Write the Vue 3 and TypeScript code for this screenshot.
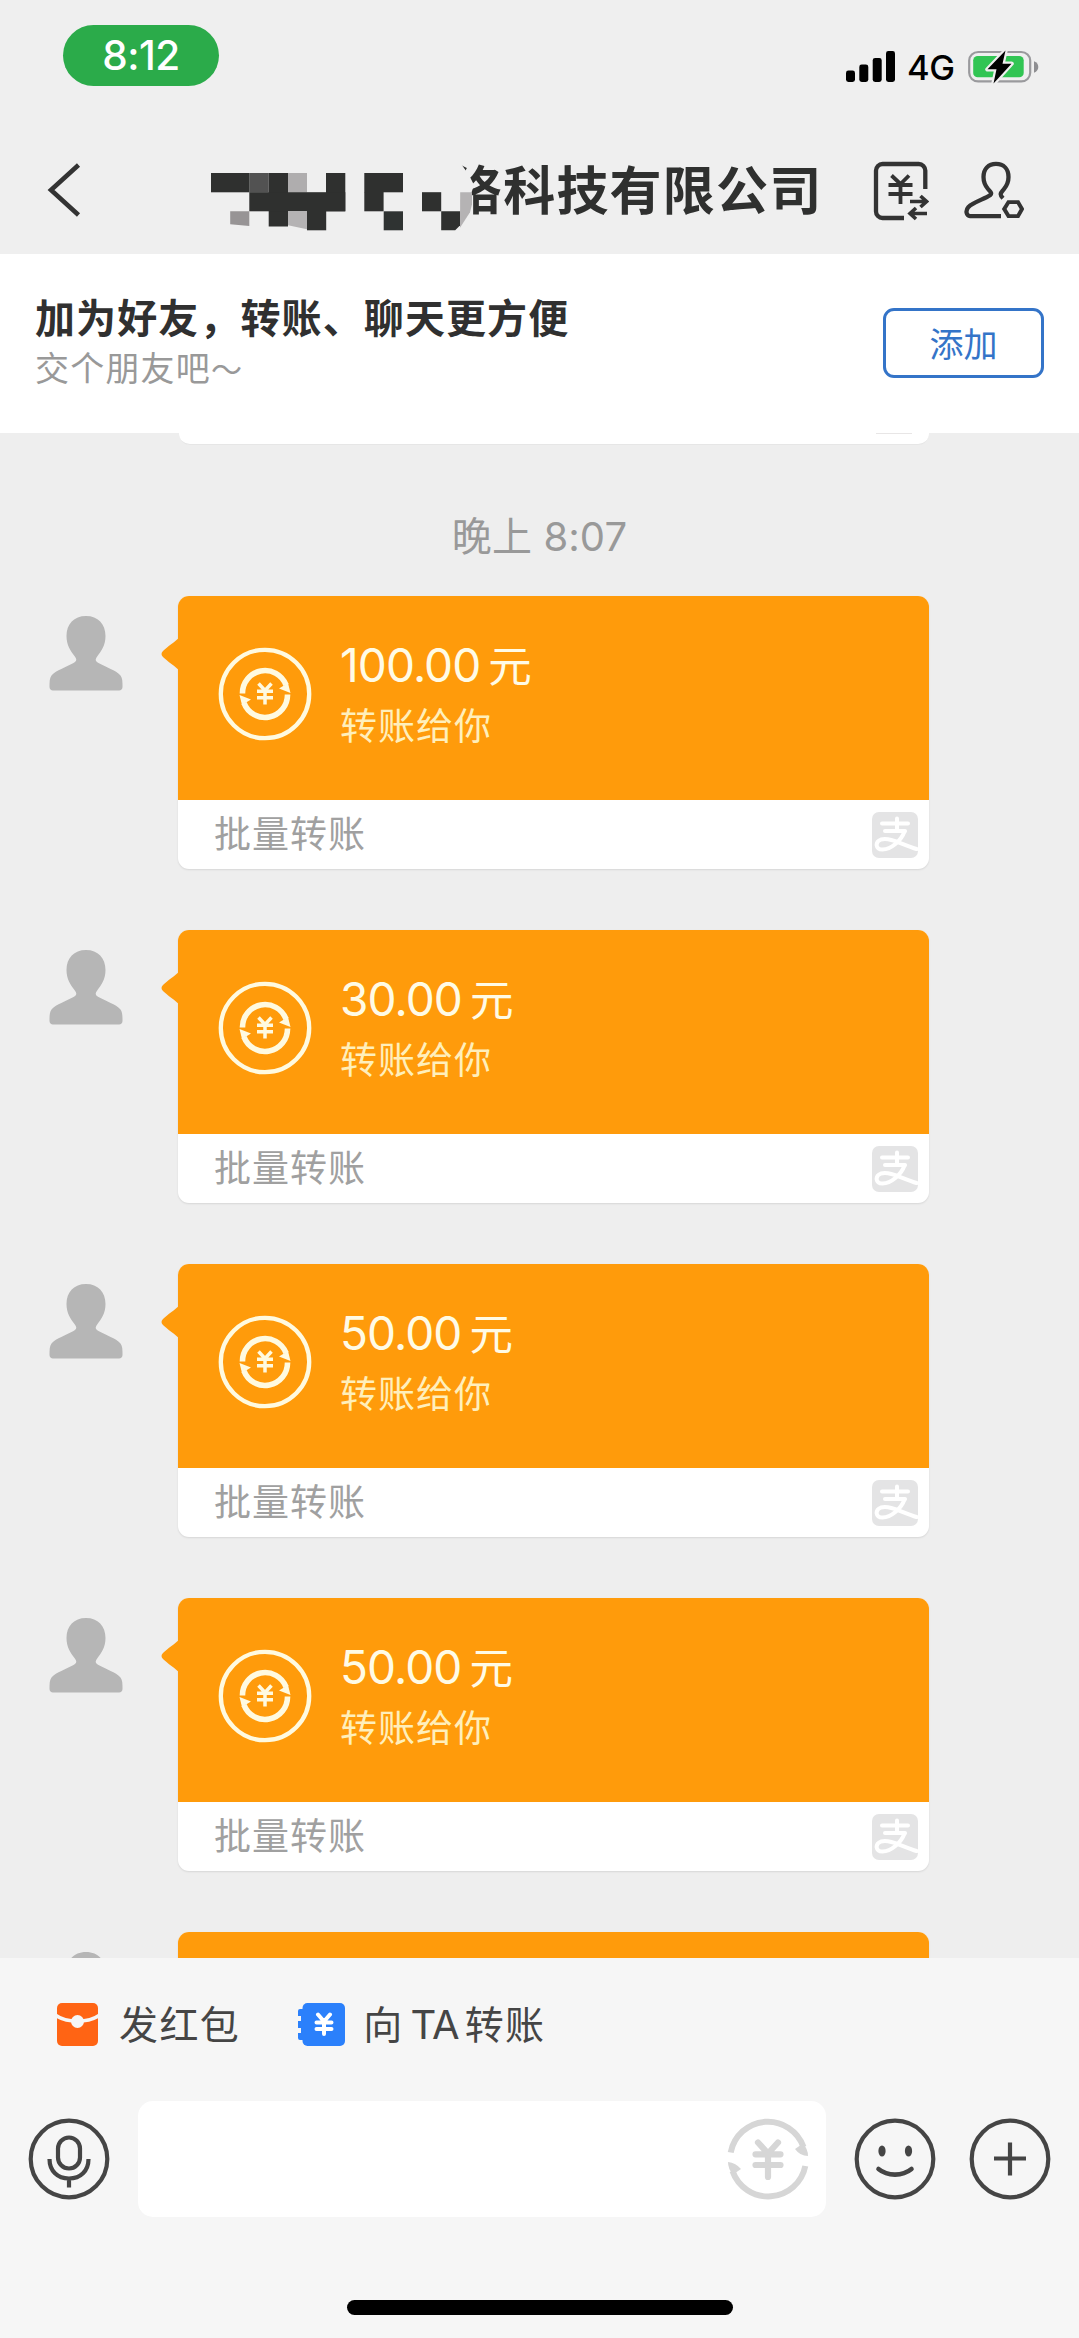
<script setup lang="ts">
interface Transfer {
  id: number
  amount: string
}

const transfers: Transfer[] = [
  { id: 1, amount: '100.00' },
  { id: 2, amount: '30.00' },
  { id: 3, amount: '50.00' },
  { id: 4, amount: '50.00' },
  { id: 5, amount: '' },
]

// Redaction blocks over the first half of the company name: x, y, width, height, fill
const blocks: [number, number, number, number, string][] = [
  [0, 0, 38.5, 19.3, '#2f302f'],
  [38.3, 0, 19.4, 19.3, '#525252'],
  [57.7, 0, 19.3, 53.5, '#2f302f'],
  [77, 0, 19, 19.3, '#afadae'],
  [115, 0, 19.3, 38.3, '#2f302f'],
  [38.3, 19.2, 96, 19.1, '#2f302f'],
  [96, 38, 19.2, 19.3, '#2f302f'],
  [153.3, 0, 38.7, 19.3, '#2f302f'],
  [153.3, 19, 19.3, 19.3, '#2f302f'],
  [172.7, 38.3, 19.3, 19, '#2f3332'],
  [211, 19.2, 19.2, 19.1, '#2f302f'],
]
</script>

<template>
  <div class="phone">
    <header class="top">
      <div class="status">
        <div class="clock">8:12</div>
        <div class="signals">
          <svg class="bars" width="49" height="31" viewBox="0 0 49 31">
            <rect x="0" y="19.500" width="9" height="11.500" rx="2.4" />
            <rect x="13.3" y="13.500" width="9" height="17.500" rx="2.4" />
            <rect x="26.7" y="7" width="9" height="24" rx="2.4" />
            <rect x="40" y="0" width="9" height="31" rx="2.4" />
          </svg>
          <span class="net">4G</span>
          <svg class="battery" width="71" height="36" viewBox="0 0 71 38" preserveAspectRatio="none">
            <rect x="1.2" y="3.2" width="61" height="31" rx="9" fill="none" stroke="#9a9a9d" stroke-width="2.2" />
            <path d="M66 13v12c3-1 4.300-3.500 4.300-6s-1.300-5-4.300-6z" fill="#8e8e91" />
            <rect x="5.200" y="7.300" width="50.500" height="22.500" rx="4.500" fill="#31c553" />
            <path d="M37.500 1.500L19.500 21.500h9L25.500 36.500L43.500 15.500h-9z" fill="#000" stroke="#efefef" stroke-width="4.500" stroke-linejoin="round" paint-order="stroke" />
          </svg>
        </div>
      </div>
      <div class="nav">
        <svg class="back" width="34" height="54" viewBox="0 0 34 54">
          <path d="M31.500 2L4 27l27.500 25" fill="none" stroke="#333" stroke-width="4.600" />
        </svg>
        <div class="name">
          <h1>络科技有限公司</h1>
          <svg class="mosaic" width="275" height="72" viewBox="0 -12 275 72">
            <path d="M232-12H248L258 2L263 12L259 24L261 43L262 58H232z" fill="#efefef" />
            <rect v-for="(b, i) in blocks" :key="i" :x="b[0]" :y="b[1]" :width="b[2]" :height="b[3]" :fill="b[4]" />
            <path d="M19.200 38.300h19.100v14.700l-19.100-1.800z" fill="#979495" />
            <path d="M77 38.300h19v18l-19-4z" fill="#b5b3b4" />
            <path d="M230.200 38.200h19v14l-5 5.100h-14z" fill="#2f302f" />
            <path d="M249.200 19.200h11.800v12l-2 8-10 15.500z" fill="#b5b3b4" />
          </svg>
        </div>
        <div class="tools">
          <svg width="56" height="60" viewBox="0 0 56 60" fill="none" stroke="#333" stroke-width="4.300">
            <path d="M52.300 28V9.500a6.500 6.500 0 0 0-6.500-6.500H9.500A6.500 6.500 0 0 0 3 9.500v41a6.500 6.500 0 0 0 6.500 6.500h21.500" />
            <path d="M18.500 14.500l9 8.500 8.500-8.500M15.500 24h24M15.500 33h24M27.500 22v21" stroke-width="3.800" />
            <path d="M37 40.500h16M47.500 35l6 5.500-6 5.500M54 52.500H38M43 47l-6 5.500 6 5.500" stroke-width="3.600" />
          </svg>
          <svg width="60" height="58" viewBox="0 0 60 60" preserveAspectRatio="none" fill="none" stroke="#333" stroke-width="4.300">
            <path d="M37 57H6c-3.500 0-5-5.500-1.500-9.500C9 43 21 39 26 35.500c2.500-2 .5-3.500-2-6.500-4-5-4.500-8-4.500-12.500C19.500 8 24.500 3 32 3s12.500 5 12.500 13.500c0 5-1 8-4.500 12.500-2.500 3.500-5.500 5-1 9.500" />
            <path d="M44.500 42.500h9.500l4 7.200-4 7.300h-9.500l-4.300-7.300z" stroke-width="4" />
          </svg>
        </div>
      </div>
    </header>

    <section class="banner">
      <div class="pitch">
        <div class="lead">加为好友，转账、聊天更方便</div>
        <div class="sub">交个朋友吧<i>～</i></div>
      </div>
      <button class="add" type="button">添加</button>
    </section>

    <main class="chat">
      <div class="previous"><i></i></div>
      <div class="when"><span>晚上</span> 8:07</div>
      <article v-for="t in transfers" :key="t.id" class="message">
        <svg class="avatar" width="74" height="76" viewBox="0 0 74 76">
          <path d="M37 1c12 0 19.500 8 19.500 20 0 9-4 15-8 20-2.500 3.500-2.500 5 1 7 8 4.500 17 7 22 12.500 2 2.500 2 6.500 2 11.500 0 2-1.500 3.500-3.500 3.500H4c-2 0-3.500-1.500-3.500-3.500 0-5 0-9 2-11.500C7.500 55 16.500 52.500 24.500 48c3.500-2 3.500-3.500 1-7-4-5-8-11-8-20C17.500 9 25 1 37 1z" fill="#b6b6b6" />
        </svg>
        <div class="card">
          <svg class="tail" width="19" height="34" viewBox="0 0 19 34">
            <path d="M19 0C15 4 6 10 2 14q-3 3 0 6c4 4 13 10 17 14z" fill="#ff9b0b" />
          </svg>
          <div class="money">
            <svg class="coin" width="94" height="94" viewBox="0 0 94 94" fill="none" stroke="#fffae0">
              <circle cx="47" cy="47" r="44.200" stroke-width="4.300" />
              <path d="M24.500 46.500A22.500 22.500 0 0 1 68 38" stroke-width="5.600" />
              <path d="M69.500 47.500A22.500 22.500 0 0 1 26 56" stroke-width="5.600" />
              <path d="M61 41.500L70 36L72.500 46z M33 52.500L24 58L21.500 48z" fill="#fffae0" stroke="none" />
              <path d="M40.500 36.500L47 43.500l6.500-7M39 44.300h16M39 50.700h16M47 43v14.500" stroke-width="3.500" />
            </svg>
            <div v-if="t.amount" class="detail">
              <div class="amount">{{ t.amount }}<span>元</span></div>
              <div class="to">转账给你</div>
            </div>
          </div>
          <div v-if="t.amount" class="foot">
            <span>批量转账</span>
            <svg width="46" height="46" viewBox="0 0 46 46">
              <rect width="46" height="46" rx="7" fill="#e4e4e5" />
              <g fill="none" stroke="#fff" stroke-width="4" stroke-linecap="round">
                <path d="M10 11.500h26M13 19h20M25 6.500V19" />
                <path d="M32.500 19.500C29 29 19 37.500 10.500 37.500C3.500 37.500 2.500 30 9 27.500C18 25 30 32.500 44.500 37" />
              </g>
            </svg>
          </div>
        </div>
      </article>
    </main>

    <footer class="composer">
      <div class="quick">
        <div class="chip">
          <svg width="41" height="43" viewBox="0 0 41 43">
            <rect width="41" height="43" rx="5" fill="#ff6414" />
            <path d="M-1 12.500C9 20 32 20 42 12.500" fill="none" stroke="#f6f6f6" stroke-width="3.600" />
            <circle cx="20.500" cy="18.500" r="6.500" fill="#f6f6f6" />
          </svg>
          <span>发红包</span>
        </div>
        <div class="chip second">
          <svg width="47" height="43" viewBox="0 0 47 43">
            <rect x="4.500" width="42.500" height="43" rx="5" fill="#2b80fb" />
            <path d="M7 6H2a2 2 0 0 0-2 2v5h3v5H0v7h3v5H0v5a2 2 0 0 0 2 2h5z" fill="#2b80fb" />
            <path d="M20 11.500l6 7 6-7M18.500 19.500h15M18.500 26h15M26 19v12" fill="none" stroke="#fff" stroke-width="4" stroke-linecap="round" />
          </svg>
          <span>向<b>TA</b>转账</span>
        </div>
      </div>
      <div class="entry">
        <svg width="82" height="82" viewBox="0 0 82 82" fill="none" stroke="#454545" stroke-width="4.200">
          <circle cx="41" cy="41" r="38.300" />
          <rect x="30" y="19.500" width="22" height="31" rx="11" />
          <path d="M21.500 41c0 12 8 19.500 19.500 19.500S60.500 53 60.500 41M41 60v9.500" />
        </svg>
        <div class="field">
          <svg width="82" height="82" viewBox="0 0 82 82" fill="none" stroke="#d6d6d6">
            <path d="M3.700 34.500A37.800 37.800 0 0 1 76.500 29M78.300 48A37.800 37.800 0 0 1 5.500 53" stroke-width="6" />
            <path d="M68 31L76 25.500Q81 31 81 38Q73 38 68 31z M14 51L6 56.500Q1 51 1 44Q9 45 14 51z" fill="#d6d6d6" stroke="none" />
            <path d="M31 24.500l10 11 10-11M28.500 36.300h25M28.500 47h25M41 36v23" stroke-width="6.200" stroke-linecap="round" />
          </svg>
        </div>
        <svg width="82" height="82" viewBox="0 0 82 82" fill="none" stroke="#454545" stroke-width="4.200">
          <circle cx="41" cy="41" r="38.300" />
          <path d="M24.500 51c9 7.500 24 7.500 33 0" stroke-linecap="round" stroke-width="4.600" />
          <ellipse cx="28" cy="33" rx="3.600" ry="5.500" fill="#454545" stroke="none" />
          <ellipse cx="54.500" cy="33" rx="3.600" ry="5.500" fill="#454545" stroke="none" />
        </svg>
        <svg class="plus" width="82" height="82" viewBox="0 0 82 82" fill="none" stroke="#454545" stroke-width="4.200">
          <circle cx="41" cy="41" r="38.300" />
          <path d="M25 40.500h32M41 24.500v33" />
        </svg>
      </div>
      <div class="home"></div>
    </footer>
  </div>
</template>

<style>
body {
  margin: 0;
}
</style>

<style scoped>
* {
  box-sizing: border-box;
}
svg {
  display: block;
  flex: none;
}
.phone {
  width: 1079px;
  height: 2338px;
  display: flex;
  flex-direction: column;
  overflow: hidden;
  background: #eee;
  font-family: 'Noto Sans CJK SC', sans-serif;
  white-space: nowrap;
}
.top {
  flex: none;
  height: 254px;
  background: #efefef;
}
.status {
  display: flex;
  justify-content: space-between;
  padding: 25px 40px 0 63px;
  height: 124px;
}
.clock {
  width: 156px;
  height: 61px;
  border-radius: 31px;
  background: #2bab4a;
  color: #fff;
  font: 500 40.5px/61px Inter, sans-serif;
  letter-spacing: -0.5px;
  text-align: center;
}
.signals {
  display: flex;
  height: 38px;
  margin-top: 24px;
}
.bars {
  margin-top: 2px;
}
.net {
  width: 61px;
  margin-left: 12px;
  font: 500 34.5px/38px Inter, sans-serif;
  letter-spacing: -0.5px;
  color: #000;
}
.nav {
  display: flex;
  align-items: flex-start;
  height: 130px;
  padding: 37px 55px 0 47px;
}
.back {
  margin-top: 2px;
}
.name {
  position: relative;
  flex: 1;
  margin-left: 130px;
  height: 76px;
}
h1 {
  margin: -11px 0 0 239px;
  font-size: 52px;
  line-height: 76px;
  letter-spacing: 1.2px;
  font-weight: 600;
  color: #2f302f;
}
.mosaic {
  position: absolute;
  left: 0;
  top: 0;
}
.tools {
  display: flex;
  gap: 35px;
}
.banner {
  flex: none;
  height: 179px;
  display: flex;
  justify-content: space-between;
  background: #fff;
  padding: 35px 35px 0 35px;
}
.lead {
  font-size: 40px;
  line-height: 54px;
  letter-spacing: 1.1px;
  font-weight: 600;
  color: #303030;
}
.sub {
  font-size: 34px;
  line-height: 48px;
  letter-spacing: 1.2px;
  color: #999;
}
.sub i {
  font-style: normal;
  font-size: 31px;
}
.add {
  width: 161px;
  height: 70px;
  margin-top: 19px;
  padding: 0;
  border: 3px solid #3474c8;
  border-radius: 11px;
  background: #fff;
  color: #3474c8;
  font: 400 34px/60px 'Noto Sans CJK SC', sans-serif;
}
.chat {
  flex: none;
  height: 1525px;
  overflow: hidden;
  background: #eee;
}
.previous {
  width: 750px;
  height: 12px;
  margin-left: 179px;
  padding-left: 697px;
  background: #fff;
  border-bottom: 1px solid #e6e6e6;
  border-radius: 0 0 11px 11px;
}
.previous i {
  display: block;
  width: 36px;
  height: 1px;
  background: #e8e6e6;
}
.when {
  height: 60px;
  margin: 59px 0 32px;
  text-align: center;
  font: 400 40px/60px Inter, sans-serif;
  letter-spacing: 0.1px;
  color: #999;
}
.when span {
  font-family: 'Noto Sans CJK SC', sans-serif;
}
.message {
  display: flex;
  height: 334px;
  padding-left: 49px;
}
.avatar {
  margin-top: 19px;
}
.card {
  position: relative;
  width: 751px;
  height: 273px;
  margin-left: 55px;
  border-radius: 11px;
  background: #fff;
  box-shadow: 0 1px 2px rgba(0, 0, 0, 0.1);
}
.tail {
  position: absolute;
  left: -17px;
  top: 41px;
}
.money {
  display: flex;
  height: 204px;
  padding: 51px 0 0 40px;
  border-radius: 11px 11px 0 0;
  background: #ff9b0b;
}
.detail {
  margin: -12px 0 0 28px;
}
.amount {
  display: flex;
  font: 400 46px/60px Inter, sans-serif;
  letter-spacing: -0.9px;
  color: #fffbe6;
}
.amount span {
  margin: -1px 0 0 8px;
  font-family: 'Noto Sans CJK SC', sans-serif;
  font-size: 43.5px;
}
.to {
  font-size: 37px;
  line-height: 52px;
  margin-top: 3px;
  letter-spacing: 1px;
  color: #ffefbb;
}
.foot {
  display: flex;
  justify-content: space-between;
  height: 69px;
  padding: 12px 11px 0 36px;
  font-size: 37px;
  line-height: 40px;
  letter-spacing: 1px;
  color: #a0a0a0;
}
.composer {
  flex: 1;
  background: #f6f6f6;
}
.quick {
  display: flex;
  height: 143px;
  padding: 45px 0 0 57px;
}
.chip {
  display: flex;
  font-size: 39px;
  line-height: 39px;
  letter-spacing: 1.4px;
  color: #454545;
}
.chip span {
  margin-left: 21px;
}
.second {
  margin-left: 58px;
}
.second span {
  margin-left: 18px;
}
.chip b {
  margin: 0 6px 0 7px;
  font: 400 40px/38px Inter, sans-serif;
  letter-spacing: -1px;
}
.entry {
  display: flex;
  align-items: center;
  height: 116px;
  padding-left: 28px;
}
.field {
  display: flex;
  align-items: center;
  justify-content: flex-end;
  width: 688px;
  height: 116px;
  margin: 0 28px;
  padding-right: 17px;
  border-radius: 15px;
  background: #fff;
}
.plus {
  margin-left: 33px;
}
.home {
  width: 386px;
  height: 15px;
  margin: 83px auto 0;
  border-radius: 8px;
  background: #000;
}
</style>
